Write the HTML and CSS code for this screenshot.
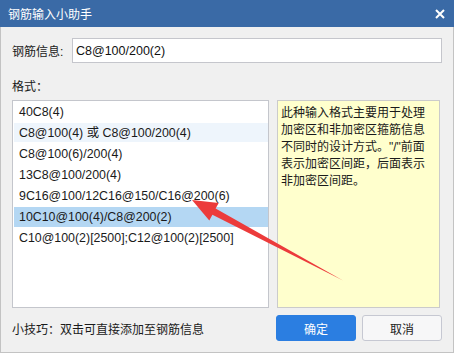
FILE: index.html
```html
<!DOCTYPE html>
<html lang="zh-CN">
<head>
    <meta charset="UTF-8">
    <title>钢筋输入小助手</title>
    <link rel="stylesheet" href="styles.css">
</head>
<body>
    <div class="window">
        <div class="titlebar">
            <span class="title">钢筋输入小助手</span>
            <svg class="close" width="10" height="10" viewBox="0 0 10 10">
                <path d="M1 1 L9 9 M9 1 L1 9" stroke="#fff" stroke-width="2"/>
            </svg>
        </div>
        <div class="content">
            <div class="info-row">
                <label class="info-label">钢筋信息:</label>
                <input class="info-input" type="text" value="C8@100/200(2)">
            </div>
            <div class="format-label">格式：</div>
            <div class="format-area">
                <ul class="format-list">
                    <li>40C8(4)</li>
                    <li class="hover">C8@100(4) 或 C8@100/200(4)</li>
                    <li>C8@100(6)/200(4)</li>
                    <li>13C8@100/200(4)</li>
                    <li>9C16@100/12C16@150/C16@200(6)</li>
                    <li class="selected">10C10@100(4)/C8@200(2)</li>
                    <li>C10@100(2)[2500];C12@100(2)[2500]</li>
                </ul>
                <div class="note">
                    此种输入格式主要用于处理<br>
                    加密区和非加密区箍筋信息<br>
                    不同时的设计方式。"/"前面<br>
                    表示加密区间距，后面表示<br>
                    非加密区间距。
                </div>
            </div>
            <div class="footer">
                <span class="tip">小技巧：双击可直接添加至钢筋信息</span>
                <div class="buttons">
                    <button class="btn btn-ok">确定</button>
                    <button class="btn btn-cancel">取消</button>
                </div>
            </div>
        </div>
        <svg class="arrow" width="454" height="353" viewBox="0 0 454 353">
            <polygon points="192,200 218.7,202.9 215.6,208.6 343,280.5 212.4,214.8 209.3,220.5" fill="#ec3b3b"/>
        </svg>
    </div>
</body>
</html>
```

FILE: styles.css
```css
body {
    margin: 0;
    font-family: "Liberation Sans", "Noto Sans CJK SC", sans-serif;
    font-size: 12px;
    color: #1a1a1a;
}
.window {
    position: relative;
    width: 454px;
    height: 353px;
    box-sizing: border-box;
    background: #f0f0f0;
    border: 1px solid #c3c3c3;
    border-top: none;
}
.titlebar {
    height: 27px;
    margin: 0 -1px;
    background: #3a6aa6;
    color: #fff;
    display: flex;
    align-items: center;
    justify-content: space-between;
    padding: 0 9px 0 8px;
}
.title {
    font-size: 12px;
}
.content {
    padding: 11px 11px 0 11px;
}
.info-row {
    display: flex;
    align-items: center;
}
.info-label {
    width: 60px;
}
.info-input {
    flex: 1;
    height: 25px;
    box-sizing: border-box;
    border: 1px solid #c5c6cc;
    padding: 0 3px;
    font-family: "Liberation Sans", "Noto Sans CJK SC", sans-serif;
    font-size: 12.5px;
    color: #111;
    outline: none;
}
.format-label {
    margin-top: 14px;
    height: 23px;
}
.format-area {
    display: flex;
    gap: 8px;
    height: 208px;
}
.format-list {
    list-style: none;
    margin: 0;
    width: 257px;
    box-sizing: border-box;
    background: #fff;
    border: 1px solid #c4c6cc;
    padding: 1px 0 1px 1px;
    font-size: 12.4px;
}
.format-list li {
    height: 21px;
    line-height: 21px;
    padding-left: 5px;
    white-space: nowrap;
}
.format-list li.hover {
    background: #eef5fc;
    height: 19px;
    line-height: 20px;
    margin-bottom: 2px;
}
.format-list li.selected {
    background: #b4d7f3;
    height: 20px;
    line-height: 20px;
    margin-bottom: 1px;
}
.note {
    width: 163px;
    box-sizing: border-box;
    background: #ffffcd;
    border: 1px solid #cbcbcb;
    padding: 4px 3px;
    line-height: 17px;
}
.footer {
    display: flex;
    align-items: center;
    justify-content: space-between;
    margin-top: 7px;
}
.buttons {
    display: flex;
    gap: 6px;
}
.btn {
    width: 80px;
    height: 26px;
    border-radius: 3px;
    font-family: "Liberation Sans", "Noto Sans CJK SC", sans-serif;
    font-size: 12px;
    cursor: pointer;
}
.btn-ok {
    background: #2b7ee1;
    border: 1px solid #2b7ee1;
    color: #fff;
}
.btn-cancel {
    background: #f7f7f8;
    border: 1px solid #c6c8d2;
    color: #222;
}
.arrow {
    position: absolute;
    left: -1px;
    top: 0;
    pointer-events: none;
}
```
